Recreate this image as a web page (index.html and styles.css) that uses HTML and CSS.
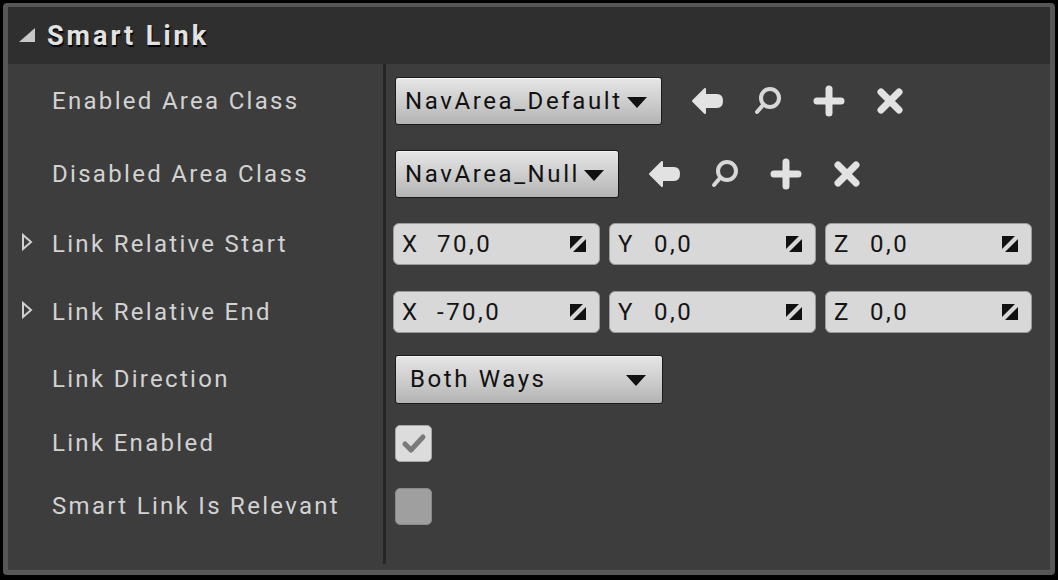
FILE: index.html
```html
<!DOCTYPE html>
<html>
<head>
<meta charset="utf-8">
<link rel="stylesheet" href="styles.css">
</head>
<body>
<div class="panel">
  <div class="header">
    <svg class="collapse" width="18" height="16" viewBox="0 0 18 16"><polygon points="1,15 17,15 17,1" fill="#c8c8c8"/></svg>
    <span class="title">Smart Link</span>
  </div>
  <div class="body">
    <div class="row r1">
      <div class="label">Enabled Area Class</div>
      <div class="value">
        <div class="combo">NavArea_Default<span class="caret"></span></div>
        <div class="icons">
          <svg width="34" height="32" viewBox="0 0 34 32"><path d="M3 16 L15 4 L15 10 L27 10 Q32 10 32 16 Q32 22 27 22 L15 22 L15 28 Z" fill="#e2e2e2" stroke="#e2e2e2" stroke-width="2" stroke-linejoin="round"/></svg>
          <svg width="34" height="32" viewBox="0 0 34 32"><circle cx="19" cy="13" r="9" fill="none" stroke="#d8d8d8" stroke-width="4"/><line x1="12" y1="20" x2="6" y2="27" stroke="#d8d8d8" stroke-width="4" stroke-linecap="round"/></svg>
          <svg width="34" height="32" viewBox="0 0 34 32"><path d="M17 4 V28 M5 16 H29" stroke="#e2e2e2" stroke-width="7" stroke-linecap="round"/></svg>
          <svg width="34" height="32" viewBox="0 0 34 32"><path d="M8 7 L26 25 M26 7 L8 25" stroke="#e2e2e2" stroke-width="7" stroke-linecap="round"/></svg>
        </div>
      </div>
    </div>
    <div class="row r2">
      <div class="label">Disabled Area Class</div>
      <div class="value">
        <div class="combo">NavArea_Null<span class="caret"></span></div>
        <div class="icons">
          <svg width="34" height="32" viewBox="0 0 34 32"><path d="M3 16 L15 4 L15 10 L27 10 Q32 10 32 16 Q32 22 27 22 L15 22 L15 28 Z" fill="#e2e2e2" stroke="#e2e2e2" stroke-width="2" stroke-linejoin="round"/></svg>
          <svg width="34" height="32" viewBox="0 0 34 32"><circle cx="19" cy="13" r="9" fill="none" stroke="#d8d8d8" stroke-width="4"/><line x1="12" y1="20" x2="6" y2="27" stroke="#d8d8d8" stroke-width="4" stroke-linecap="round"/></svg>
          <svg width="34" height="32" viewBox="0 0 34 32"><path d="M17 4 V28 M5 16 H29" stroke="#e2e2e2" stroke-width="7" stroke-linecap="round"/></svg>
          <svg width="34" height="32" viewBox="0 0 34 32"><path d="M8 7 L26 25 M26 7 L8 25" stroke="#e2e2e2" stroke-width="7" stroke-linecap="round"/></svg>
        </div>
      </div>
    </div>
    <div class="row r3">
      <div class="label"><svg class="expand" width="12" height="18" viewBox="0 0 12 18"><polygon points="2,2 10,9 2,16" fill="none" stroke="#d0d0d0" stroke-width="2"/></svg>Link Relative Start</div>
      <div class="value vec">
        <div class="field"><span class="axis">X</span><span class="num">70,0</span><svg class="drag" width="18" height="18" viewBox="0 0 18 18"><polygon points="1,1 14,1 1,14" fill="#111"/><polygon points="17,4 17,17 4,17" fill="#111"/></svg></div>
        <div class="field"><span class="axis">Y</span><span class="num">0,0</span><svg class="drag" width="18" height="18" viewBox="0 0 18 18"><polygon points="1,1 14,1 1,14" fill="#111"/><polygon points="17,4 17,17 4,17" fill="#111"/></svg></div>
        <div class="field"><span class="axis">Z</span><span class="num">0,0</span><svg class="drag" width="18" height="18" viewBox="0 0 18 18"><polygon points="1,1 14,1 1,14" fill="#111"/><polygon points="17,4 17,17 4,17" fill="#111"/></svg></div>
      </div>
    </div>
    <div class="row r4">
      <div class="label"><svg class="expand" width="12" height="18" viewBox="0 0 12 18"><polygon points="2,2 10,9 2,16" fill="none" stroke="#d0d0d0" stroke-width="2"/></svg>Link Relative End</div>
      <div class="value vec">
        <div class="field"><span class="axis">X</span><span class="num">-70,0</span><svg class="drag" width="18" height="18" viewBox="0 0 18 18"><polygon points="1,1 14,1 1,14" fill="#111"/><polygon points="17,4 17,17 4,17" fill="#111"/></svg></div>
        <div class="field"><span class="axis">Y</span><span class="num">0,0</span><svg class="drag" width="18" height="18" viewBox="0 0 18 18"><polygon points="1,1 14,1 1,14" fill="#111"/><polygon points="17,4 17,17 4,17" fill="#111"/></svg></div>
        <div class="field"><span class="axis">Z</span><span class="num">0,0</span><svg class="drag" width="18" height="18" viewBox="0 0 18 18"><polygon points="1,1 14,1 1,14" fill="#111"/><polygon points="17,4 17,17 4,17" fill="#111"/></svg></div>
      </div>
    </div>
    <div class="row r5">
      <div class="label">Link Direction</div>
      <div class="value">
        <div class="combo wide">Both Ways<span class="caret"></span></div>
      </div>
    </div>
    <div class="row r6">
      <div class="label">Link Enabled</div>
      <div class="value">
        <div class="check on"><svg width="26" height="22" viewBox="0 0 26 22"><path d="M4 12 L10 18 L22 5" fill="none" stroke="#7a7a7a" stroke-width="5" stroke-linecap="round" stroke-linejoin="round"/></svg></div>
      </div>
    </div>
    <div class="row r7">
      <div class="label">Smart Link Is Relevant</div>
      <div class="value">
        <div class="check off"></div>
      </div>
    </div>
    <div class="row filler">
      <div class="label"></div>
      <div class="value"></div>
    </div>
  </div>
</div>
</body>
</html>
```

FILE: styles.css
```css
html, body {
  margin: 0;
  padding: 0;
  background: #000;
  width: 1058px;
  height: 580px;
  overflow: hidden;
}
body {
  font-family: Roboto, "Liberation Sans", sans-serif;
}
.panel {
  margin: 3px 0 0 3px;
  width: 1052px;
  height: 572px;
  box-sizing: border-box;
  border: 5px solid #575757;
  border-top-width: 4px;
  border-radius: 4px;
  background: #3d3d3d;
  display: flex;
  flex-direction: column;
}
.header {
  height: 57px;
  background: #2f2f2f;
  display: flex;
  align-items: center;
  flex-shrink: 0;
}
.collapse {
  margin-left: 10px;
  margin-top: -2px;
}
.title {
  margin-left: 11px;
  font-size: 27px;
  font-weight: bold;
  letter-spacing: 3px;
  color: #e2e2e2;
  text-shadow: 1px 2px 1px #000;
}
.body {
  flex: 1;
  display: flex;
  flex-direction: column;
}
.row {
  display: flex;
  flex-shrink: 0;
}
.r1 { height: 74px; }
.r2 { height: 72px; }
.r3 { height: 68px; }
.r4 { height: 68px; }
.r5 { height: 66px; }
.r6 { height: 62px; }
.r7 { height: 64px; }
.filler { flex: 1; }
.label {
  width: 378px;
  flex-shrink: 0;
  box-sizing: border-box;
  padding-left: 44px;
  display: flex;
  align-items: center;
  position: relative;
  color: #d2d2d2;
  font-size: 24px;
  letter-spacing: 2.3px;
  border-right: 3px solid #262626;
}
.filler .label { margin-bottom: 6px; }
.expand {
  position: absolute;
  left: 13px;
  top: 50%;
  margin-top: -11px;
}
.value {
  flex: 1;
  display: flex;
  align-items: center;
  padding-left: 9px;
}
.combo {
  height: 48px;
  box-sizing: border-box;
  border: 1px solid #1a1a1a;
  border-radius: 3px;
  background: linear-gradient(#e6e6e6, #c9c9c9 60%, #b3b3b3);
  box-shadow: inset 0 1px 0 #f4f4f4;
  color: #111;
  font-size: 24px;
  letter-spacing: 2.6px;
  display: flex;
  align-items: center;
  padding: 0 14px 0 9px;
}
.combo.wide {
  width: 268px;
  justify-content: space-between;
  padding-left: 14px;
  padding-right: 16px;
  height: 49px;
}
.caret {
  width: 0;
  height: 0;
  border-left: 10px solid transparent;
  border-right: 10px solid transparent;
  border-top: 11px solid #111;
  margin-left: 4px;
  margin-top: 3px;
}
.icons {
  display: flex;
  align-items: center;
  gap: 27px;
  margin-left: 28px;
}
.vec {
  padding-left: 7px;
  gap: 9px;
}
.field {
  width: 207px;
  height: 42px;
  box-sizing: border-box;
  background: #d8d8d8;
  border: 1px solid #9a9a9a;
  border-radius: 6px;
  display: flex;
  align-items: center;
  padding: 0 12px 0 8px;
  color: #141414;
  font-size: 24px;
  letter-spacing: 2.5px;
}
.axis { width: 35px; }
.num { flex: 1; }
.vec .field:nth-child(n+2) .axis { width: 36px; }
.check {
  width: 37px;
  height: 37px;
  box-sizing: border-box;
  border-radius: 5px;
  display: flex;
  align-items: center;
  justify-content: center;
}
.check.on {
  background: #dcdcdc;
  border: 1px solid #a8a8a8;
}
.check.off {
  background: #9f9f9f;
  border: 1px solid #8a8a8a;
}
```
